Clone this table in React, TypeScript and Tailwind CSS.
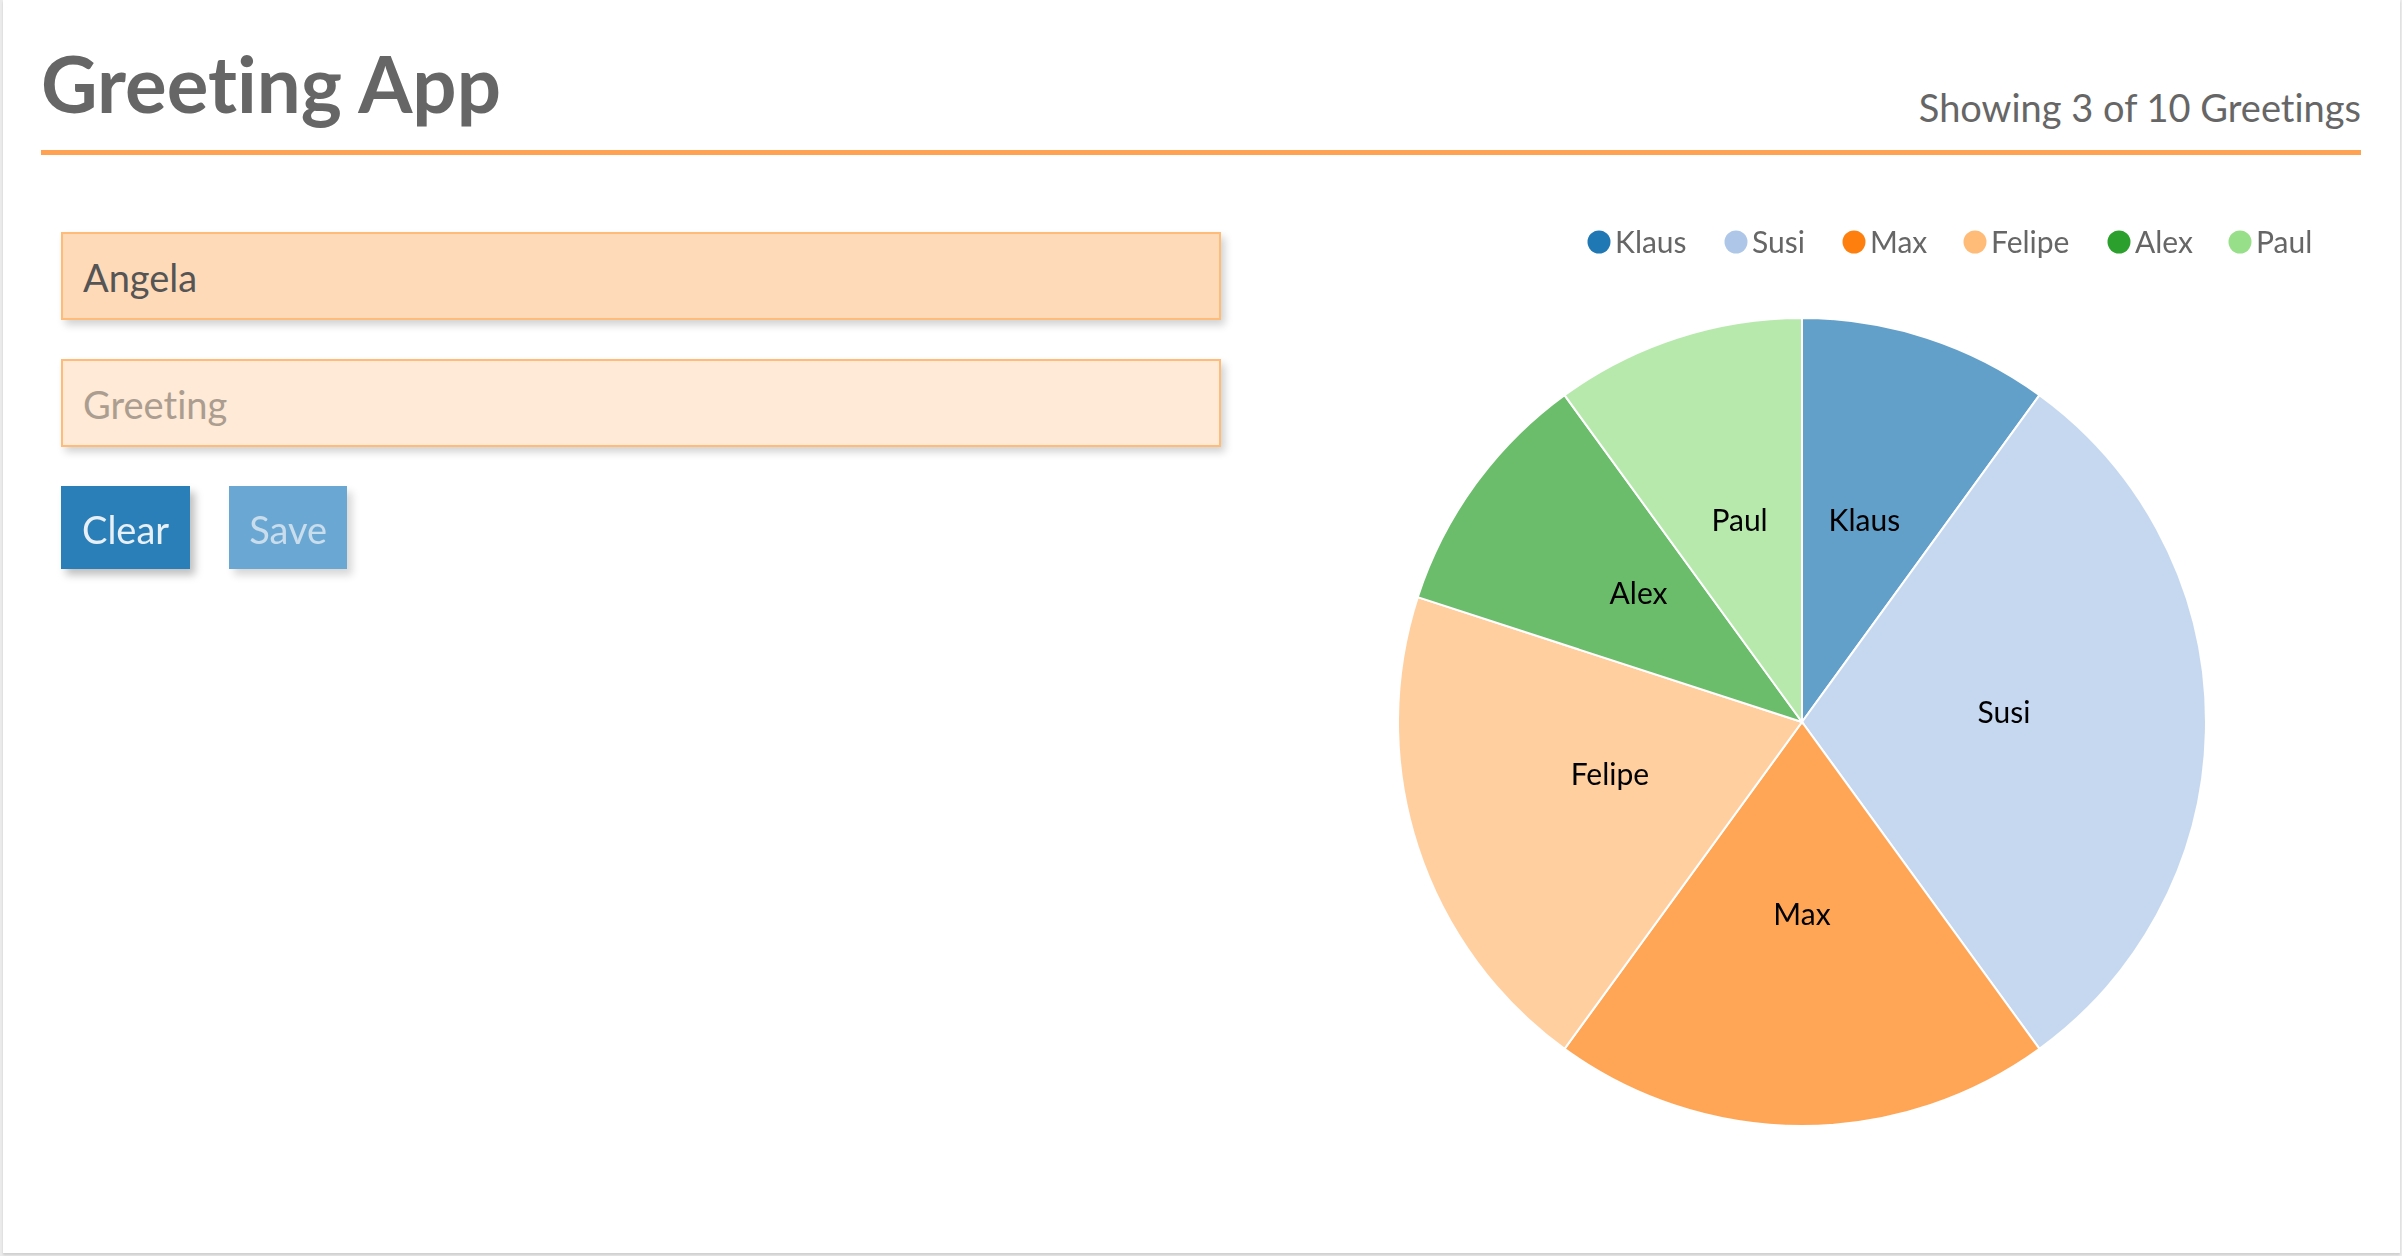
import { useState } from 'react'

type Slice = { label: string; value: number; color: string }

const slices: Slice[] = [
  { label: 'Klaus', value: 1, color: '#1f77b4' },
  { label: 'Susi', value: 3, color: '#aec7e8' },
  { label: 'Max', value: 2, color: '#ff7f0e' },
  { label: 'Felipe', value: 2, color: '#ffbb78' },
  { label: 'Alex', value: 1, color: '#2ca02c' },
  { label: 'Paul', value: 1, color: '#98df8a' },
]

// legend dot centres, measured off the chart
const legendX = [338, 475, 593, 714, 858, 979]

const CX = 541
const CY = 490
const R = 404

function point(angle: number, r: number) {
  return [CX + r * Math.sin(angle), CY - r * Math.cos(angle)]
}

function PieChart() {
  const total = slices.reduce((s, d) => s + d.value, 0)
  let start = 0
  const arcs = slices.map((d) => {
    const end = start + (d.value / total) * Math.PI * 2
    const [x0, y0] = point(start, R)
    const [x1, y1] = point(end, R)
    const large = end - start > Math.PI ? 1 : 0
    const mid = (start + end) / 2
    const [lx, ly] = point(mid, R / 2)
    const path = `M${CX},${CY} L${x0},${y0} A${R},${R} 0 ${large} 1 ${x1},${y1} Z`
    start = end
    return { ...d, path, lx, ly }
  })

  return (
    <svg width={1100} height={920} className="overflow-visible">
      <g>
        {slices.map((d, i) => (
          <g key={d.label}>
            <circle cx={legendX[i]} cy={10} r={11.5} fill={d.color} />
            <text x={legendX[i] + 16} y={21} fontSize={30} fill="#666">
              {d.label}
            </text>
          </g>
        ))}
      </g>
      <g>
        {arcs.map((a) => (
          <path
            key={a.label}
            d={a.path}
            fill={a.color}
            fillOpacity={0.7}
            stroke="#fff"
            strokeWidth={2}
          />
        ))}
        {arcs.map((a) => (
          <text key={a.label} x={a.lx} y={a.ly + 1} fontSize={30} fill="#000" textAnchor="middle">
            {a.label}
          </text>
        ))}
      </g>
    </svg>
  )
}

export default function App() {
  const [name, setName] = useState('Angela')
  const [greeting, setGreeting] = useState('')

  return (
    <div className="h-screen bg-[#ebebeb] pl-[3px] pr-[2px] pb-[3px] font-['Lato','Open_Sans',sans-serif] [font-variant-ligatures:none]">
      <div className="h-full bg-white shadow-[0_2px_2px_rgba(0,0,0,0.12)]">
        <header className="ml-[38px] mr-[39px] flex items-end justify-between border-b-[5px] border-[#ffa352] pt-[37px] pb-[19px]">
          <h1 className="text-[78px] font-bold leading-[1.2] text-[#666]">Greeting App</h1>
          <p className="text-[38px] font-normal leading-[1.2] text-[#666]">Showing 3 of 10 Greetings</p>
        </header>

        <main className="flex gap-[40px] pt-[77px] pr-[39px] pl-[58px]">
          <div className="flex w-[1160px] flex-col gap-[39px]">
            <input
              value={name}
              onChange={(e) => setName(e.target.value)}
              className="h-[88px] w-full border-2 border-[#ffbb78] bg-[#ffdab9] px-[20px] pt-[3px] text-[38px] leading-[1.2] text-[#555] shadow-[4px_5px_8px_rgba(0,0,0,0.18)] outline-none [font-variant-ligatures:none]"
            />
            <input
              value={greeting}
              onChange={(e) => setGreeting(e.target.value)}
              placeholder="Greeting"
              autoFocus
              className="h-[88px] w-full border-2 border-[#ffbb78] bg-[#feead6] px-[20px] pt-[3px] text-[38px] leading-[1.2] text-[#555] caret-[#555] shadow-[4px_5px_8px_rgba(0,0,0,0.18)] outline-none [font-variant-ligatures:none] placeholder:text-[#ab9d90]"
            />
            <div className="flex gap-[39px]">
              <button
                onClick={() => {
                  setName('')
                  setGreeting('')
                }}
                className="flex h-[83px] items-center bg-[#2a7fb8] px-[21px] pt-[6px] text-[38px] leading-[1.2] text-[#e8f0f6] shadow-[5px_6px_8px_rgba(0,0,0,0.25)]"
              >
                Clear
              </button>
              <button
                disabled={!greeting}
                className="flex h-[83px] items-center bg-[#6aa8d3] px-[20px] pt-[6px] text-[38px] leading-[1.2] text-[#c9dded] shadow-[5px_6px_8px_rgba(0,0,0,0.16)]"
              >
                Save
              </button>
            </div>
          </div>

          <div className="flex-1">
            <PieChart />
          </div>
        </main>
      </div>
    </div>
  )
}
